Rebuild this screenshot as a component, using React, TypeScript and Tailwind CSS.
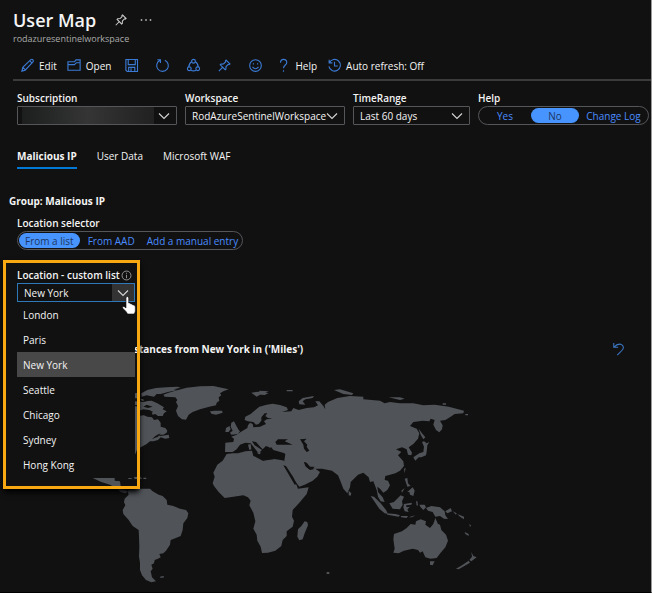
import type { ReactNode } from "react";

const locations = ["London", "Paris", "New York", "Seattle", "Chicago", "Sydney", "Hong Kong"];

const Chevron = () => (
	<svg viewBox="0 0 12 12" className="pointer-events-none h-3 w-3 shrink-0" fill="none" stroke="#d6d6d6" strokeWidth="1.1">
		<path d="M1 3.5 6 8.5 11 3.5" />
	</svg>
);

const Icon = ({ children, className = "h-[15px] w-[15px]" }: { children: ReactNode; className?: string }) => (
	<svg viewBox="0 0 16 16" className={`shrink-0 ${className}`} fill="none" stroke="currentColor" strokeWidth="1.2">
		{children}
	</svg>
);

const Pin = ({ className }: { className?: string }) => (
	<Icon className={className}>
		<path d="M9.7 2.2 13.8 6.3 12.8 7 12 6.7 9.6 9.1 9.5 11.9 8.7 12.5 3.5 7.3 4.2 6.5 6.9 6.4 9.3 4 9 3ZM5.9 10 2 14" />
	</Icon>
);

const Picker = ({ id, label, value, width }: { id: string; label: string; value: string; width: string }) => (
	<div className={width}>
		<label htmlFor={id} className="block font-semibold">
			{label}
		</label>
		<div className="relative flex h-[19px] items-center rounded-[1px] border border-[#55565a]">
			<select id={id} className="h-full w-full appearance-none bg-transparent pl-1.5 pr-4 outline-none">
				<option>{value}</option>
			</select>
			{value === "" && <span className="absolute inset-y-0 left-1 right-[22px] bg-linear-to-r from-[#1c1f1e] via-[#353535] to-[#202120]" />}
			<span className="absolute right-1.5">
				<Chevron />
			</span>
		</div>
	</div>
);

const Tool = ({ label, children }: { label?: string; children: ReactNode }) => (
	<button type="button" className={`flex items-center gap-1 whitespace-nowrap ${label ? "px-[3px]" : ""}`} aria-label={label}>
		{children}
	</button>
);

const WorldMap = () => (
	<svg viewBox="0 0 1170 645" className="w-[390px]" fill="#505358" role="img" aria-label="World map">
		{/* North America */}
		<path d="M100 66 134 70 146 68 150 78 146 86 160 88 162 94 185 92 202 100 212 106 222 112 218 118 230 124 222 130 218 138 204 138 196 132 188 134 184 126 174 122 160 124 158 134 172 140 186 142 192 150 204 148 212 158 212 170 226 174 232 182 230 188 220 194 200 194 212 198 236 194 238 204 226 206 212 202 204 210 190 214 180 214 170 222 155 230 142 236 136 252 110 262 80 280 40 290 0 280Z" />
		<path d="M154 70 172 60 198 54 230 52 262 50 272 53 252 58 262 60 234 66 212 72 200 72 192 80 170 76 155 80Z" />
		<path d="M220 74 236 68 256 62 290 53 330 49 370 48 398 54 416 58 400 64 390 70 394 76 386 82 388 92 380 98 378 106 358 110 330 118 308 126 296 134 288 149 276 148 264 138 258 122 264 108 258 96 262 90 256 82 224 80Z" />
		<path d="M360 124 374 122 396 122 398 128 378 134 364 131Z" />
		<path d="M8 324 74 324 74 332 90 334 92 348 102 360 112 362 108 370 92 366 78 354 60 344 34 336Z" />
		<path d="M115 324h10v3h-10zM132 321 152 320 156 327 134 327ZM160 323h9v4h-9z" />
		{/* South America */}
		<path d="M112 362 124 358 140 356 180 356 188 364 206 374 218 378 230 390 232 404 250 408 270 416 288 420 295 430 292 444 280 460 278 480 272 498 252 506 242 510 240 524 228 542 220 550 208 552 212 562 204 566 194 570 192 580 184 584 188 596 182 604 186 622 198 634 184 637 168 630 156 616 150 600 150 578 147 560 148 530 147 500 146 480 128 468 116 450 100 432 98 420 106 406 102 396 104 386 116 374Z" />
		<path d="M210 620 220 618 223 622 212 624Z" />
		{/* British Isles and the Arctic */}
		<path d="M424 158 432 154 438 166 446 180 450 184 444 192 424 194 420 188 428 182 422 170ZM408 174 418 168 422 178 416 186 406 186Z" />
		<path d="M484 68 504 65 536 69 524 75 510 74 500 80ZM508 62 536 64 524 69 508 67ZM590 60h18v4h-18zM626 94 638 84 672 78 668 84 646 88 638 94 646 104 628 103ZM732 60 750 58 790 70 786 75 760 72ZM896 82 930 82 944 86 930 90ZM1058 100h10v4h-10z" />
		{/* Europe and Asia */}
		<path d="M405 246 406 218 430 216 432 206 424 200 440 194 452 186 462 180 472 174 474 166 480 158 488 162 490 172 510 170 528 162 522 154 530 148 548 146 534 144 526 138 532 130 524 130 514 142 514 152 506 162 498 164 490 156 474 154 464 150 466 140 482 132 496 120 508 110 530 104 548 101 570 105 590 112 594 120 576 126 604 124 610 114 626 120 650 114 672 112 684 106 676 94 688 94 700 108 706 118 704 104 714 96 742 84 780 78 820 80 820 88 870 92 884 100 900 96 930 100 970 100 1000 106 1034 104 1076 110 1122 122 1120 130 1094 132 1082 140 1066 150 1050 152 1058 166 1056 178 1048 187 1038 180 1030 164 1034 150 1022 146 1018 154 998 152 970 156 960 168 980 176 988 190 984 206 970 222 956 232 966 248 964 256 954 254 950 238 936 232 918 238 934 246 924 256 940 274 942 288 930 302 916 310 900 314 886 318 884 330 894 332 900 346 892 360 880 368 870 356 862 350 864 366 878 382 884 396 872 394 864 380 860 360 850 334 840 336 836 322 820 308 804 314 782 336 780 352 772 370 760 356 750 330 744 316 726 302 696 296 672 296 660 290 650 278 642 276 648 290 660 300 676 296 690 306 682 320 668 332 644 344 628 350 620 340 602 316 582 288 582 278 586 252 574 250 560 252 544 246 538 232 528 228 518 238 512 232 498 216 486 214 494 226 516 240 506 250 498 240 482 220 466 218 450 224 440 238 428 246Z" />
		<path d="M474 224 482 222 484 238 478 240ZM500 248 512 246 510 254ZM1126 132h8v4h-8z" />
		{/* Africa */}
		<path d="M410 252 428 250 444 250 466 244 486 242 490 258 508 264 522 272 530 264 548 266 572 270 582 272 596 302 610 328 620 346 624 356 656 352 650 372 630 396 608 420 606 440 612 452 608 470 590 484 590 498 578 510 574 528 556 542 534 548 516 549 512 530 502 512 500 494 490 476 496 454 490 428 478 406 482 392 474 382 460 376 430 380 404 384 386 366 372 348 368 340 374 320 370 308 382 284 398 272Z" />
		<path d="M644 454 652 456 654 466 644 490 638 508 628 511 622 500 624 478 634 468Z" />
		{/* Islands of the Pacific and Indian oceans */}
		<path d="M970 262 988 250 1000 246 1002 230 996 216 1002 214 1010 220 1018 216 1012 226 1010 246 1008 256 994 262 986 262 976 272ZM986 176 996 190 1006 202 1000 208 992 194ZM942 296 947 294 944 310ZM944 326 952 324 954 340 962 348 952 350ZM934 362 944 354 936 368ZM952 366 968 352 974 362 970 378 960 374 958 366ZM898 400 912 396 932 376 942 380 936 394 938 404 930 418 908 416ZM842 378 852 380 872 400 888 420 894 432 884 430 868 416ZM890 430 916 432 930 436 926 440 892 434ZM932 438 954 438 950 444 934 442ZM956 442 976 436 966 442ZM942 402 966 398 964 404 948 406 950 412 960 410 952 418 956 426 944 424 940 412ZM978 394h4l2 12-4 1zM988 404 1004 404 1008 412 1000 420 992 412ZM1008 414 1024 408 1050 412 1064 424 1066 436 1074 447 1062 446 1050 438 1036 440 1028 426 1014 422ZM1066 424 1082 414 1086 424 1072 430ZM1088 424 1100 430 1098 434ZM1102 432 1122 440 1122 448 1110 440ZM1124 486 1136 492 1136 498 1126 492ZM1138 462 1143 466 1140 472ZM776 362 784 370 782 377 776 376Z" />
		<path d="M912 492 936 484 950 474 962 462 976 464 978 454 992 448 1008 454 1006 464 1020 474 1030 462 1036 444 1044 462 1050 464 1054 480 1068 494 1074 512 1066 532 1052 548 1040 564 1022 566 1006 562 998 544 990 548 984 540 968 536 942 542 926 550 910 548 914 536 910 508ZM1020 574 1034 574 1028 586 1020 584ZM1144 546 1150 558 1160 562 1144 574 1138 570 1146 560ZM1136 572 1140 578 1106 598 1098 596 1116 586ZM710 606h8v6h-8z" />
		{/* Inland seas and straits */}
		<g fill="#111">
			<path d="M556 216 564 208 594 208 584 214 608 224 590 224 560 224ZM630 208 650 206 642 214 652 224 650 230 658 242 650 246 642 236 640 224ZM580 286 588 288 610 322 620 342 614 344 594 310ZM642 276 650 280 658 290 674 290 668 296 658 298 646 288Z" />
			<path d="M130 84 150 86 156 92 176 92 160 96 134 94ZM130 104 148 106 150 110 132 108ZM144 124 160 118 178 120 190 126 180 130 164 128 160 136 146 138ZM170 104 188 110 174 114 160 110ZM186 208 196 198 212 190 204 200 194 204Z" />
			<path d="M538 234 544 232 550 240 584 250 582 266 560 264 548 256ZM508 252 524 264 540 256 552 268 518 272 496 260Z" />
		</g>
	</svg>
);

export default function App() {
	return (
		<div className="min-h-screen border-b border-r border-b-black border-r-[#999] bg-[#111] font-['Open_Sans','Noto_Sans',sans-serif] text-[10px] leading-4 text-[#f4f4f4]">
			<header className="pl-[13px] pt-2">
				<div className="flex items-center">
					<h1 className="text-[18px] font-semibold leading-6">User Map</h1>
					<button type="button" aria-label="Pin" className="ml-[18px] text-[#ccc]"><Pin className="h-3.5 w-3.5" /></button>
					<button type="button" aria-label="More" className="ml-3 flex h-4 w-3 items-center justify-center text-[#ccc]">
						<Icon className="h-3 w-3"><path strokeWidth="2" d="M1 8h2M7 8h2M13 8h2" /></Icon>
					</button>
				</div>
				<p className="text-[9px] leading-[14px] text-[#aaa]">rodazuresentinelworkspace</p>
			</header>
			<div className="ml-[13px] mt-1.5 flex h-[29px] items-center gap-2.5 border-b-2 border-[#3b3b3b] pl-[7px] text-[#3b7ad4]">
				<Tool>
					<Icon><path d="M2 14 3 10 11.5 1.8q1.4-1 2.3.2t-.2 2.3L5.5 13ZM3 10l3 3M10.5 3l2.7 2.7" /></Icon>
					<span className="text-[#f4f4f4]">Edit</span>
				</Tool>
				<Tool>
					<Icon><path d="M1 4h7l1.5-2H14v11H1ZM1 7h7l2-2h4" /></Icon>
					<span className="text-[#f4f4f4]">Open</span>
				</Tool>
				<Tool label="Save"><Icon><path d="M2 1.6h12.4v12.8H3.5L2 13ZM4.5 2v5h7.5V2M5 14V10h6.5v4M7.5 11v3" /></Icon></Tool>
				<Tool label="Refresh"><Icon><path d="M5.3 2.5A6.2 6.2 0 1 0 10.5 2.4M2.5 1.9h3.3v3.3" /></Icon></Tool>
				<Tool label="Share"><Icon><circle cx="8" cy="3.5" r="2" /><circle cx="3.5" cy="11.5" r="2" /><circle cx="12.5" cy="11.5" r="2" /><path d="M6 4Q3 6 3 9.5M10 4q3 2 3 5.5M5 13q3 1.6 6 0" /></Icon></Tool>
				<Tool label="Pin"><Pin /></Tool>
				<Tool label="Feedback"><Icon><circle cx="8" cy="8" r="6.2" /><path d="M4.8 9.5q3.2 4 6.4 0M5.8 5.5V7M10.2 5.5V7" /></Icon></Tool>
				<Tool>
					<Icon><path d="M4.8 5q0-3.5 3.3-3.5t3.4 3.3C11.5 7.5 8 7.5 8 11M8 13v1.7" /></Icon>
					<span className="text-[#f4f4f4]">Help</span>
				</Tool>
				<Tool>
					<Icon><path d="M2.5 5A6.2 6.2 0 1 1 2 9M2.3 1.8v3.4h3.4M8 4v4.5h3.5" /></Icon>
					<span className="text-[#f4f4f4]">Auto refresh: Off</span>
				</Tool>
			</div>
			<div className="flex gap-2 pl-[17px] pr-0.5 pt-[9px]">
				<Picker id="subscription" label="Subscription" value="" width="w-40" />
				<Picker id="workspace" label="Workspace" value="RodAzureSentinelWorkspace" width="w-40" />
				<Picker id="range" label="TimeRange" value="Last 60 days" width="w-[117px]" />
				<div className="flex-1 whitespace-nowrap">
					<p className="font-semibold">Help</p>
					<div className="flex h-[19px] items-center rounded-full border border-[#55565a] text-[#4a8cff]">
						<button type="button" className="w-[52px]">Yes</button>
						<button type="button" className="h-[15px] w-12 rounded-full bg-[#4894fe] leading-none text-[#1c365f]">No</button>
						<button type="button" className="flex-1">Change Log</button>
					</div>
				</div>
			</div>
			<nav className="ml-[17px] mt-[23px] flex gap-5">
				<button type="button" className="border-b-2 border-[#0078d4] pb-[3px] font-bold">Malicious IP</button>
				<button type="button" className="border-b-2 border-transparent pb-[3px]">User Data</button>
				<button type="button" className="border-b-2 border-transparent pb-[3px]">Microsoft WAF</button>
			</nav>
			<h2 className="ml-[9px] mt-6 font-bold">Group: Malicious IP</h2>
			<div className="ml-[17px] mt-1.5">
				<p className="font-semibold">Location selector</p>
				<div className="flex h-[19px] w-fit items-center gap-2 rounded-full border border-[#55565a] pl-px pr-1 text-[#4a8cff]">
					<button type="button" className="h-[15px] rounded-full bg-[#4894fe] px-1.5 leading-none text-[#1c365f]">From a list</button>
					<button type="button">From AAD</button>
					<button type="button" className="ml-1">Add a manual entry</button>
				</div>
			</div>
			<div className="relative">
				<section className="absolute left-[3px] top-2.5 z-10 w-[137px] border-[3px] border-[#f8a911] pb-[9px] pl-[11px] pr-0.5 pt-1 shadow-md shadow-black">
					<label htmlFor="location" className="flex items-center gap-px whitespace-nowrap font-semibold">
						Location - custom list
						<Icon className="h-[11px] w-[11px] text-[#aaa]"><circle cx="8" cy="8" r="6.5" /><path d="M8 7v5M8 4v1.5" /></Icon>
					</label>
					<div className="relative flex h-[19px] items-center border border-[#2e77b8] bg-[#111]">
						<input id="location" defaultValue="New York" className="w-full bg-transparent pl-1.5 outline-none" />
						<button type="button" aria-label="Show locations" className="flex h-full w-[22px] shrink-0 items-center justify-center bg-[#333]"><Chevron /></button>
						<svg viewBox="0 0 14 20" className="absolute -right-0.5 top-3 h-5 w-3.5" fill="#fff" stroke="#111" strokeWidth=".6">
							<path d="M4 12V2q0-1.5 1.3-1.5T6.7 2v5h1q1 0 1 1h1q1 0 1 1h1q1.6 0 1.6 2v4q0 1-1.2 3H5.5Q5 16 1 12.5 0 11 1 10.5 2 10 4 12Z" />
						</svg>
					</div>
					<ul className="bg-[#111]">
						{locations.map((name) => (
							<li key={name} className={`flex h-[25px] items-center pl-1.5 ${name === "New York" ? "bg-[#484848]" : ""}`}>{name}</li>
						))}
					</ul>
				</section>
				<div className="flex items-center justify-between pl-[134px] pr-[25px] pt-[91px]">
					<h3 className="font-bold">stances from New York in ('Miles')</h3>
					<button type="button" aria-label="Undo" className="text-[#3e79c8]"><Icon className="h-3.5 w-3.5"><path d="M2 1v5h5M2 6q5-5 9-3 4 3 0 7L6 15" /></Icon></button>
				</div>
				<div className="mt-[13px] pl-[90px]">
					<WorldMap />
				</div>
			</div>
		</div>
	);
}
